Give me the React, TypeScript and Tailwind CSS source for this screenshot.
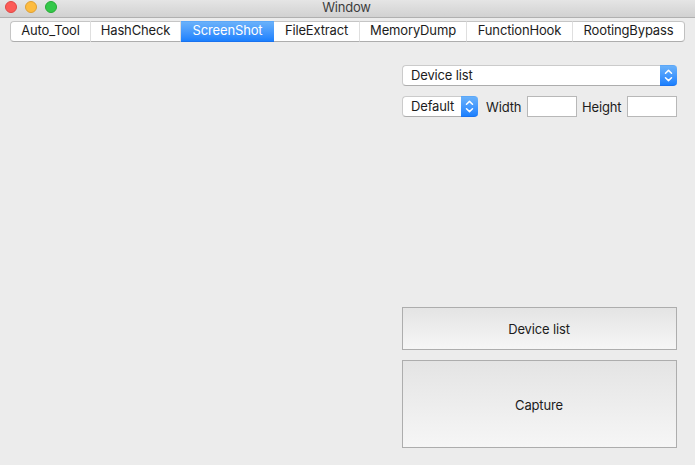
const tabs = [
  { label: 'Auto_Tool', size: 'w-[81px]' },
  { label: 'HashCheck', size: 'w-[90px]' },
  { label: 'ScreenShot', size: 'w-[93px]', active: true },
  { label: 'FileExtract', size: 'w-[86px]' },
  { label: 'MemoryDump', size: 'w-[107px]' },
  { label: 'FunctionHook', size: 'w-[106px]' },
  { label: 'RootingBypass', size: 'w-[112px]' },
];

function Arrows() {
  return (
    <span className="flex h-[21px] w-[17px] shrink-0 items-center justify-center rounded-r-[4px] border-y border-t-[#5ba7f8] border-b-[#1a72ee] bg-linear-to-b from-[#69b1fa] to-[#1a80fe]">
      <svg width="9" height="13" viewBox="0 0 9 13" fill="none" stroke="white" strokeWidth="1.5" strokeLinecap="round" strokeLinejoin="round">
        <path d="M1.5 4.2 4.5 1.4 7.5 4.2M1.5 8.8 4.5 11.6 7.5 8.8" />
      </svg>
    </span>
  );
}

function Select({ label, size }: { label: string; size: string }) {
  return (
    <button className={`flex h-[21px] ${size}`}>
      <span className="flex h-[21px] flex-1 items-center rounded-l-[4px] border border-r-0 border-[#cbcbcb] border-b-[#adadad] bg-white pl-2">
        {label}
      </span>
      <Arrows />
    </button>
  );
}

export default function App() {
  return (
    <div className="flex h-[465px] w-[695px] flex-col overflow-hidden bg-[#ececec] font-['Inter','Liberation_Sans',sans-serif] text-[13px] leading-[19px] tracking-[-0.15px] text-[#1c1c1c]">
      <header className="grid h-[18px] shrink-0 grid-cols-[1fr_auto_1fr] border-b border-[#b0b0b0] bg-linear-to-b from-[#e5e5e5] to-[#d1d1d1]">
        <div className="flex gap-2 pt-px pl-[5px]">
          <span className="size-3 rounded-full border border-[#df4744] bg-[#fc5b57]" />
          <span className="size-3 rounded-full border border-[#dea034] bg-[#fdbc40]" />
          <span className="size-3 rounded-full border border-[#27aa35] bg-[#34c84a]" />
        </div>
        <h1 className="pr-[2px] leading-[15px] tracking-[-0.2px] text-[#3d3d3d]">Window</h1>
        <div />
      </header>
      <nav className="mx-[10px] mt-[3px] flex h-[21px] shrink-0">
        {tabs.map((tab) => (
          <button
            key={tab.label}
            className={`h-[21px] shrink-0 border-y pb-[2px] leading-[17px] whitespace-nowrap ${tab.size} ${
              tab.active
                ? 'border-t-[#5ba7f8] border-b-[#1a72ee] bg-linear-to-b from-[#69b1fa] to-[#1a80fe] text-white'
                : 'border-r border-t-[#c5c5c5] border-r-[#dfdfdf] border-b-[#adadad] bg-white first:rounded-l-[4px] first:border-l first:border-l-[#c5c5c5] last:rounded-r-[4px] last:border-r-[#c0c0c0]'
            }`}
          >
            {tab.label}
          </button>
        ))}
      </nav>
      <main className="mt-[23px] ml-[402px] flex w-[275px] flex-col">
        <Select label="Device list" size="w-[275px]" />
        <div className="mt-[10px] flex h-[21px] items-center">
          <Select label="Default" size="w-[76px]" />
          <label className="w-[49px] pt-[2px] pl-[8px]">Width</label>
          <input aria-label="Width" className="h-[21px] w-[50px] border border-[#b8b8b8] bg-white" />
          <label className="w-[50px] pt-[2px] pl-[5px]">Height</label>
          <input aria-label="Height" className="h-[21px] w-[50px] border border-[#b8b8b8] bg-white" />
        </div>
        <button className="mt-[190px] h-[43px] border border-[#adadad] bg-linear-to-b from-[#e4e4e4] to-[#f6f6f6] pt-[2px] pr-px">Device list</button>
        <button className="mt-[10px] h-[88px] border border-[#adadad] bg-linear-to-b from-[#e4e4e4] to-[#f6f6f6] pt-[2px] pr-px">Capture</button>
      </main>
    </div>
  );
}
